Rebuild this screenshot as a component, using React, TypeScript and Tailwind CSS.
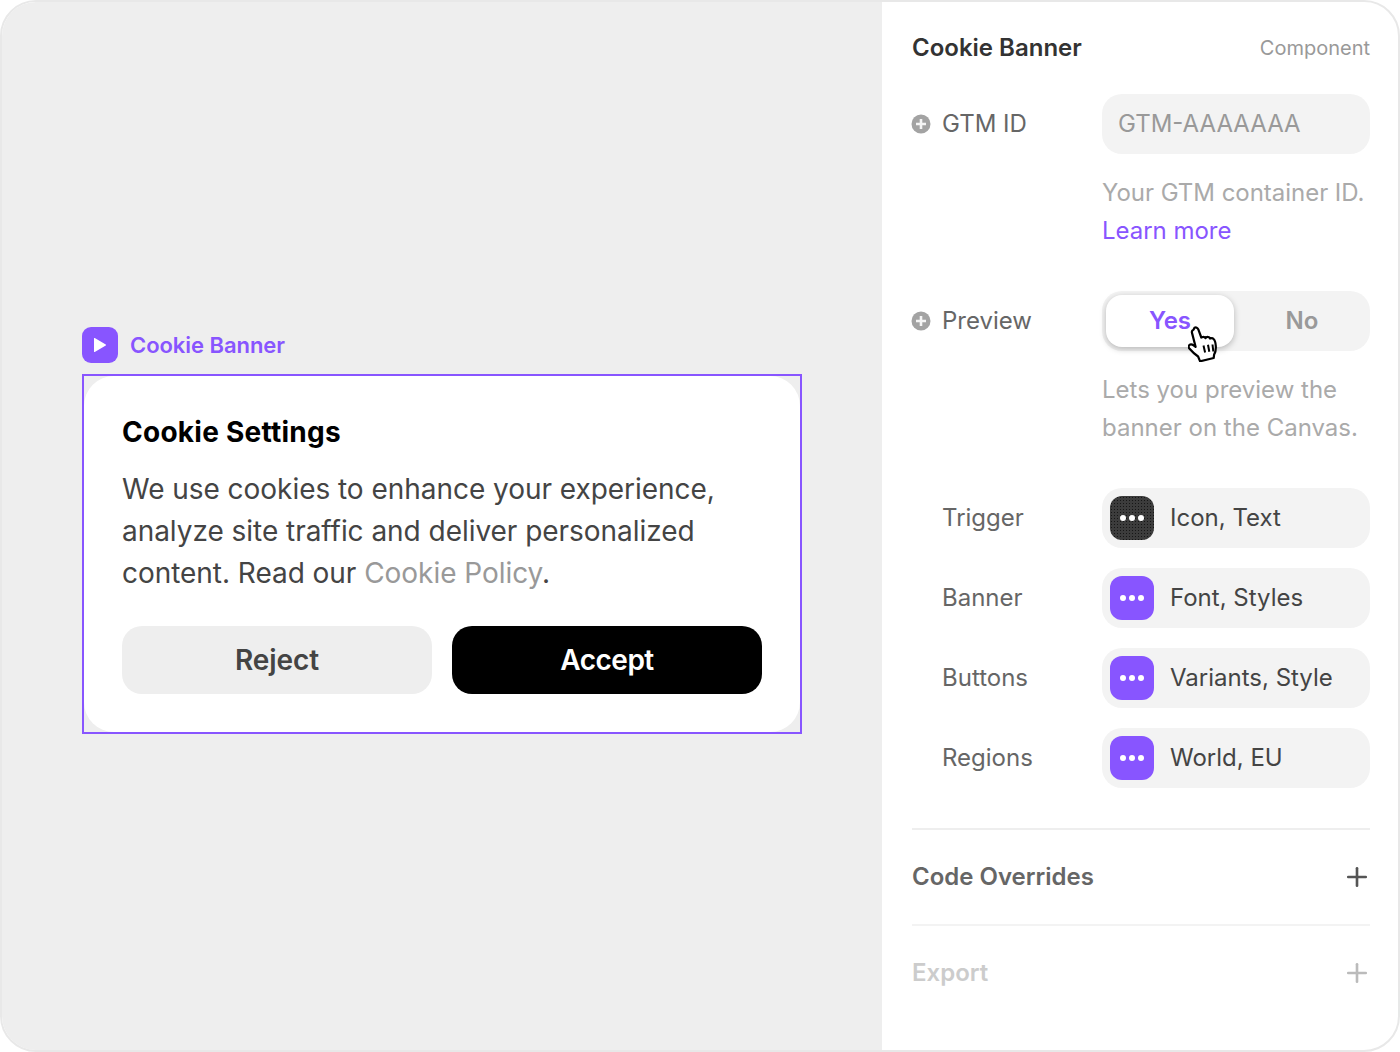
import { Plus } from "lucide-react";

const settings = [
  { label: "Trigger", value: "Icon, Text", dark: true },
  { label: "Banner", value: "Font, Styles", dark: false },
  { label: "Buttons", value: "Variants, Style", dark: false },
  { label: "Regions", value: "World, EU", dark: false },
];

function AddDot() {
  return (
    <svg width="20" height="20" viewBox="0 0 20 20" className="shrink-0 -ml-px">
      <circle cx="10" cy="10" r="9.5" fill="#a3a3a3" />
      <path d="M10 5v10M5 10h10" stroke="#f5f5f5" strokeWidth="2.6" />
    </svg>
  );
}

function Dots() {
  return (
    <div className="flex items-center gap-[3px]">
      <span className="size-[6px] rounded-full bg-white" />
      <span className="size-[6px] rounded-full bg-white" />
      <span className="size-[6px] rounded-full bg-white" />
    </div>
  );
}

function HandCursor() {
  return (
    <svg
      width="34"
      height="38"
      viewBox="0 0 34 38"
      className="absolute left-[86px] top-[33px]"
    >
      <path
        d="M6.5 3.800c1.500-.8 3.200-.1 3.800 1.500l3 8.200.6-.3c1.400-.6 2.800-.3 3.600.8.7-1 2.200-1.300 3.400-.7.6.3 1 .7 1.200 1.200 1.200-.6 2.600-.4 3.500.5 1.200 1.100 2 4 2.200 7 .2 3.300-.3 6.500-1.700 8.700l-.4 3.300-13.600 3.300-2-4.800c-2.800-1.900-6.400-5.200-8.500-7.700-1.200-1.400-1.200-2.900-.2-3.800 1-1 2.700-.8 4.200.3l2 1.500-3.600-13.900c-.4-1.500.3-2.700 1.500-3.100z"
        fill="white"
        stroke="black"
        strokeWidth="2.200"
        strokeLinejoin="round"
      />
      <path
        d="M15.500 21.500l1.600 7M20 20.800l1.300 7M24.500 20.500l.8 7"
        stroke="black"
        strokeWidth="2"
        fill="none"
      />
    </svg>
  );
}

export default function App() {
  return (
    <div className="w-[1400px] h-[1052px] bg-white font-['Inter',sans-serif]">
      <div className="flex h-full overflow-hidden rounded-[36px] border-2 border-[#e8e8e8]">
        {/* Canvas */}
        <div className="w-[882px] shrink-0 -ml-[2px] -my-[2px] bg-[#eeeeee] flex flex-col pl-[82px] pt-[327px]">
          <div className="flex items-center gap-3 h-[36px] mb-[11px]">
            <div className="size-9 rounded-[9px] bg-[#8855ff] flex items-center justify-center">
              <svg width="14" height="16" viewBox="0 0 14 16">
                <path d="M1 1.500v13a.5.5 0 0 0 .76.43l11-6.500a.5.5 0 0 0 0-.86l-11-6.500A.5.5 0 0 0 1 1.500z" fill="white" />
              </svg>
            </div>
            <span className="text-[22px] font-semibold text-[#8855ff] tracking-[-0.05px]">Cookie Banner</span>
          </div>
          <div className="w-[720px] h-[360px] border-2 border-[#8855ff] bg-[#eeeeee]">
            <div className="h-full bg-white rounded-[30px] px-[38px] pt-[38px]">
              <h1 className="text-[28px] leading-[36px] font-bold text-black tracking-[0.25px]">Cookie Settings</h1>
              <p className="mt-[18px] text-[28px] leading-[42px] text-[#444444] tracking-[-0.04px]">
                We use cookies to enhance your experience, analyze site traffic and deliver personalized content. Read our{" "}
                <span className="text-[#999999]">Cookie Policy</span>.
              </p>
              <div className="mt-[32px] flex gap-5">
                <button className="w-[310px] h-[68px] rounded-[20px] bg-[#eeeeee] text-[28px] font-semibold text-[#444444] tracking-[-0.1px]">
                  Reject
                </button>
                <button className="w-[310px] h-[68px] rounded-[20px] bg-black text-[28px] font-semibold text-white tracking-[-0.5px]">
                  Accept
                </button>
              </div>
            </div>
          </div>
        </div>

        {/* Properties */}
        <div className="flex-1 pl-[30px] pr-[28px] pt-[22px] text-[24px] leading-[38px]">
          <div className="flex items-center justify-between h-[48px]">
            <h2 className="font-semibold text-[#333333]">Cookie Banner</h2>
            <span className="text-[20px] text-[#999999]">Component</span>
          </div>

          <div className="mt-[22px] flex items-center h-[60px]">
            <div className="w-[190px] flex items-center gap-[11px] text-[#666666]">
              <AddDot />
              GTM ID
            </div>
            <div className="flex-1 h-full rounded-[20px] bg-[#f3f3f3] flex items-center pl-4 text-[#999999]">GTM-AAAAAAA</div>
          </div>
          <p className="mt-5 ml-[190px] text-[#aaaaaa] tracking-[-0.03px]">
            Your GTM container ID. <span className="text-[#8855ff]">Learn more</span>
          </p>

          <div className="mt-[41px] flex items-center h-[60px]">
            <div className="w-[190px] flex items-center gap-[11px] text-[#666666]">
              <AddDot />
              Preview
            </div>
            <div className="relative flex-1 h-full rounded-[20px] bg-[#f3f3f3] p-1 flex font-semibold">
              <div className="w-[128px] rounded-[16px] bg-white shadow-[0_2px_6px_rgba(0,0,0,0.25)] flex items-center justify-center text-[#8855ff]">
                Yes
              </div>
              <div className="flex-1 flex items-center justify-center pl-1 text-[#999999]">No</div>
              <HandCursor />
            </div>
          </div>
          <p className="mt-5 ml-[190px] text-[#aaaaaa]">Lets you preview the banner on the Canvas.</p>

          <div className="mt-[41px] flex flex-col gap-5">
            {settings.map((s) => (
              <div key={s.label} className="flex items-center h-[60px]">
                <div className="w-[190px] pl-[30px] text-[#666666]">{s.label}</div>
                <div className="flex-1 h-full rounded-[20px] bg-[#f3f3f3] flex items-center gap-4 pl-2 text-[#444444]">
                  {s.dark ? (
                    <div className="size-11 rounded-[12px] flex items-center justify-center bg-[#3c3c3c] bg-[radial-gradient(#161616_0.8px,transparent_1px)] bg-[length:3px_3px]">
                      <Dots />
                    </div>
                  ) : (
                    <div className="size-11 rounded-[12px] flex items-center justify-center bg-[#8855ff]">
                      <Dots />
                    </div>
                  )}
                  {s.value}
                </div>
              </div>
            ))}
          </div>

          <div className="mt-10 border-t-2 border-[#eeeeee] h-[96px] flex items-center justify-between font-semibold text-[#666666]">
            Code Overrides
            <Plus size={30} strokeWidth={2.1} className="text-[#555555] -mr-[2px]" />
          </div>
          <div className="border-t-2 border-[#f3f3f3] h-[96px] flex items-center justify-between font-semibold text-[#cccccc]">
            Export
            <Plus size={30} strokeWidth={2.1} className="text-[#bbbbbb] -mr-[2px]" />
          </div>
        </div>
      </div>
    </div>
  );
}
